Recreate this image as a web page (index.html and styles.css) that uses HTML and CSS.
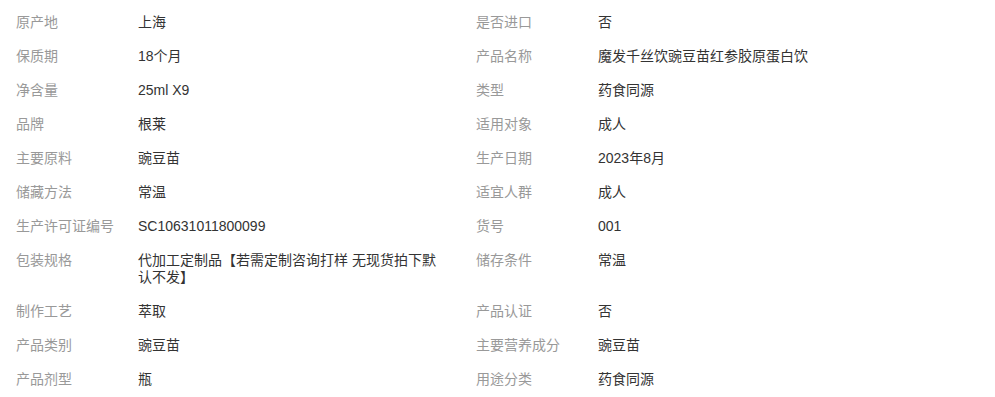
FILE: index.html
```html
<!DOCTYPE html>
<html lang="zh-CN">
<head>
<meta charset="utf-8">
<title>商品参数</title>
<link rel="stylesheet" href="styles.css">
</head>
<body>
<div class="attrs">
  <div class="label">原产地</div><div class="value">上海</div>
  <div class="label">是否进口</div><div class="value">否</div>

  <div class="label">保质期</div><div class="value">18个月</div>
  <div class="label">产品名称</div><div class="value">魔发千丝饮豌豆苗红参胶原蛋白饮</div>

  <div class="label">净含量</div><div class="value">25ml X9</div>
  <div class="label">类型</div><div class="value">药食同源</div>

  <div class="label">品牌</div><div class="value">根莱</div>
  <div class="label">适用对象</div><div class="value">成人</div>

  <div class="label">主要原料</div><div class="value">豌豆苗</div>
  <div class="label">生产日期</div><div class="value">2023年8月</div>

  <div class="label">储藏方法</div><div class="value">常温</div>
  <div class="label">适宜人群</div><div class="value">成人</div>

  <div class="label">生产许可证编号</div><div class="value">SC10631011800099</div>
  <div class="label">货号</div><div class="value">001</div>

  <div class="label">包装规格</div><div class="value">代加工定制品【若需定制咨询打样 无现货拍下默认不发】</div>
  <div class="label">储存条件</div><div class="value">常温</div>

  <div class="label">制作工艺</div><div class="value">萃取</div>
  <div class="label">产品认证</div><div class="value">否</div>

  <div class="label">产品类别</div><div class="value">豌豆苗</div>
  <div class="label">主要营养成分</div><div class="value">豌豆苗</div>

  <div class="label">产品剂型</div><div class="value">瓶</div>
  <div class="label">用途分类</div><div class="value">药食同源</div>
</div>
</body>
</html>
```
FILE: styles.css
```css
html, body {
  margin: 0;
  padding: 0;
  background: #ffffff;
}

body {
  font-family: "Liberation Sans", "Noto Sans CJK SC", sans-serif;
  font-size: 14px;
  line-height: 17px;
}

.attrs {
  display: grid;
  grid-template-columns: 122px 338px 122px 1fr;
  padding: 6px 0 0 16px;
}

.label,
.value {
  padding: 8px 0 9px;
}

.label {
  color: #999999;
}

.value {
  color: #333333;
  padding-right: 30px;
}
```
